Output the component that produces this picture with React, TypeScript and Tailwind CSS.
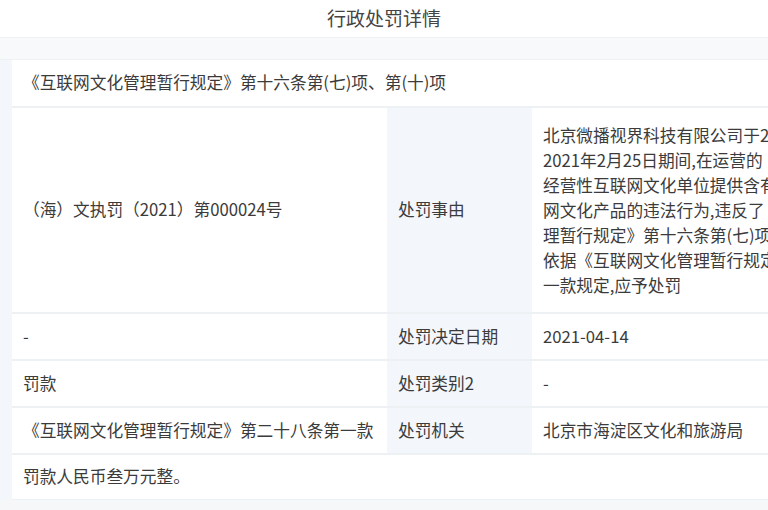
import React from 'react';

const reasonLines = [
  '北京微播视界科技有限公司于2020年12月至',
  '2021年2月25日期间,在运营的“抖音”平台为',
  '经营性互联网文化单位提供含有禁止内容的互联',
  '网文化产品的违法行为,违反了《互联网文化管',
  '理暂行规定》第十六条第(七)项、第(十)项的',
  '依据《互联网文化管理暂行规定》第二十八条第',
  '一款规定,应予处罚',
];

const Cell = ({ children, label, className = '' }: { children: React.ReactNode; label?: boolean; className?: string }) => (
  <div
    className={`flex items-center px-[11px] whitespace-nowrap ${label ? 'bg-[#f3f6fb]' : 'bg-white'} ${className}`}
  >
    {children}
  </div>
);

export default function App() {
  return (
    <div
      className="w-[768px] h-[510px] overflow-hidden bg-white text-[#3b3b3b] flex flex-col"
      style={{ fontFamily: '"Noto Sans CJK SC", "Noto Sans", sans-serif' }}
    >
      <div className="h-[37px] shrink-0 flex items-center justify-center text-[19px] text-[#444]">
        行政处罚详情
      </div>
      <div className="h-[23px] shrink-0 bg-[#f8f9fa] border-y border-[#eff1f3]" />

      <div className="flex h-[440px] shrink-0">
        <div className="w-[12px] shrink-0 bg-[#f3f6fa]" />
        <div className="flex-1 overflow-hidden text-[16.7px]">
          <div className="w-[960px] flex flex-col">
            {/* 法律依据 */}
            <Cell className="h-[48px] border-b-2 border-[#eef1f4]">
              《互联网文化管理暂行规定》第十六条第(七)项、第(十)项
            </Cell>

            <div className="grid grid-cols-[375px_145px_440px] border-b-2 border-[#eef1f4]">
              <Cell className="h-[204px]">（海）文执罚（2021）第000024号</Cell>
              <Cell label>处罚事由</Cell>
              <div className="flex flex-col justify-center px-[11px] leading-[25px] whitespace-nowrap">
                {reasonLines.map((l, i) => (
                  <div key={i}>{l}</div>
                ))}
              </div>
            </div>

            {[
              ['-', '处罚决定日期', '2021-04-14'],
              ['罚款', '处罚类别2', '-'],
              ['《互联网文化管理暂行规定》第二十八条第一款', '处罚机关', '北京市海淀区文化和旅游局'],
            ].map((r, i) => (
              <div key={i} className="grid grid-cols-[375px_145px_440px] border-b-2 border-[#eef1f4]">
                <Cell className="h-[45px]">{r[0]}</Cell>
                <Cell label>{r[1]}</Cell>
                <Cell>{r[2]}</Cell>
              </div>
            ))}

            <Cell className="h-[46px] border-b-2 border-[#eef1f4]">罚款人民币叁万元整。</Cell>
          </div>
        </div>
      </div>
      <div className="flex-1 bg-[#f6f7f8]" />
    </div>
  );
}
